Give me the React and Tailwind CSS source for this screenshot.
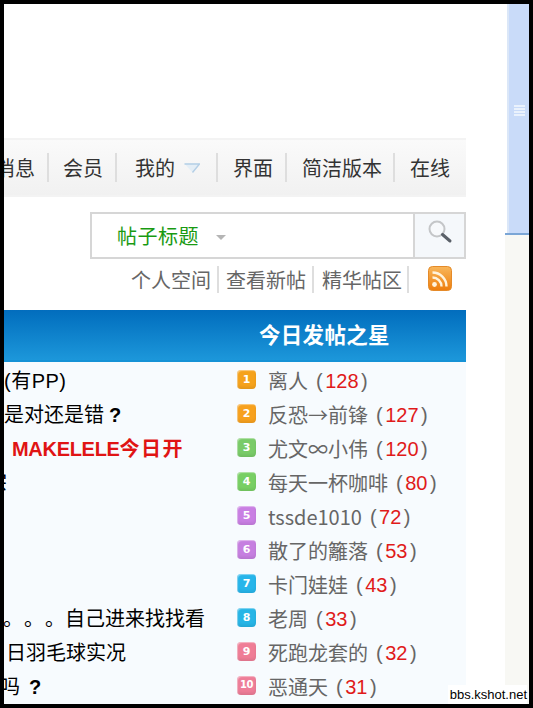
const NAV = [
  { label: "消息", width: "w-[45px]", clip: true },
  { label: "会员", width: "w-[68px]", pad: "pl-[14px]" },
  { label: "我的", width: "w-[101px]", pad: "pl-[18px]", arrow: true },
  { label: "界面", width: "w-[69px]", pad: "pl-[15px]" },
  { label: "简洁版本", width: "w-[108px]" },
  { label: "在线", width: "w-[71px]", last: true },
];

const STARS = [
  { name: "离人", count: 128, color: "#f5a21c" },
  { name: "反恐→前锋", count: 127, color: "#f7a11e" },
  { name: "尤文∞小伟", count: 120, color: "#79cb68" },
  { name: "每天一杯咖啡", count: 80, color: "#78cf64" },
  { name: "tssde1010", count: 72, color: "#c97fe3" },
  { name: "散了的籬落", count: 53, color: "#c67fe0" },
  { name: "卡门娃娃", count: 43, color: "#27b5ea" },
  { name: "老周", count: 33, color: "#27b5e6" },
  { name: "死跑龙套的", count: 32, color: "#ef7d96" },
  { name: "恶通天", count: 31, color: "#ee7d98" },
];

function RssIcon() {
  return (
    <svg width="24" height="25" viewBox="0 0 24 25" className="block">
      <defs>
        <linearGradient id="rss" x1="0" y1="0" x2="0" y2="1">
          <stop offset="0" stopColor="#f8b65a" />
          <stop offset="1" stopColor="#ee7d0c" />
        </linearGradient>
      </defs>
      <rect x="0.5" y="0.5" width="23" height="24" rx="4" fill="url(#rss)" stroke="#e58a28" />
      <circle cx="6.5" cy="18.5" r="2.4" fill="#fff3dc" />
      <path d="M4.5 11.5a9 9 0 0 1 9 9" fill="none" stroke="#fff3dc" strokeWidth="2.4" />
      <path d="M4.5 6.5a14 14 0 0 1 14 14" fill="none" stroke="#fff3dc" strokeWidth="2.4" />
    </svg>
  );
}

function SearchIcon() {
  return (
    <svg width="26" height="26" viewBox="0 0 26 26" className="block">
      <circle cx="10" cy="10" r="7.5" fill="#f7f9fb" stroke="#c4c6c8" strokeWidth="2" />
      <path d="M15.5 15.5l7.5 6.5" stroke="#5a6068" strokeWidth="3" strokeLinecap="round" />
    </svg>
  );
}

function MenuArrow() {
  return (
    <svg width="16" height="10" viewBox="0 0 16 10" className="ml-[9px] block">
      <path d="M0.5 0.5H15.5L8.5 9.5Z" fill="#e4eef6" />
      <path d="M0.5 1H15.5L8.5 9.5" fill="none" stroke="#b4cfe6" strokeWidth="1.4" />
    </svg>
  );
}

function RankBadge({ rank, color }) {
  return (
    <span
      className={`mb-[4px] flex h-[19px] w-[19px] shrink-0 items-center justify-center rounded-[4px] font-bold text-white shadow-[inset_1px_1px_1px_rgba(255,255,255,0.45),inset_0_-2px_3px_rgba(0,0,0,0.08)] ${rank === 10 ? "text-[10px] tracking-[-0.5px]" : "text-[11px]"} leading-none font-['DejaVu_Sans',sans-serif]`}
      style={{ backgroundColor: color }}
    >
      {rank}
    </span>
  );
}

export default function App() {
  return (
    <div className="relative flex h-[708px] w-[533px] overflow-hidden bg-black p-[4px] font-['Liberation_Sans','Noto_Sans_CJK_SC',sans-serif] text-[20px]">
      <main className="h-[700px] w-[501px] bg-white pt-[134px]">
        <div className="w-[462px]">
          {/* nav bar */}
          <nav className="flex h-[59px] items-center overflow-hidden border-y-2 border-[#f3f3f3] bg-gradient-to-b from-[#fafafa] to-[#f1f1f1] text-[#333]">
            {NAV.map((item) => (
              <div
                key={item.label}
                className={`flex h-[29px] shrink-0 items-center ${item.width} ${item.last ? "" : "border-r-2 border-[#dedede]"} ${item.clip ? "justify-end pr-[12px]" : item.pad || "pl-[15px]"}`}
              >
                <span className="whitespace-nowrap pt-[2px]">{item.label}</span>
                {item.arrow && <MenuArrow />}
              </div>
            ))}
          </nav>

          {/* search */}
          <div className="mt-[15px] flex justify-end">
            <div className="flex h-[47px] w-[376px] border-2 border-[#d6d6d6]">
              <div className="flex flex-1 items-center pl-[25px] text-[#199a12]">
                <span className="pt-[3px] tracking-[0.5px]">帖子标题</span>
                <span className="ml-[17px] mt-[3px] h-0 w-0 border-x-[5px] border-t-[5px] border-x-transparent border-t-[#b5b5b5]" />
              </div>
              <div className="flex w-[51px] justify-center border-l-2 border-[#d6d6d6] bg-[#f5f8fb] pt-[5px] pl-[1px]">
                <SearchIcon />
              </div>
            </div>
          </div>

          {/* quick links */}
          <div className="flex h-[51px] items-start justify-end pt-[7px] text-[#666]">
            <div className="flex h-[27px] items-center">
              <span className="w-[88px] border-r-2 border-[#dedede] pt-[3px] leading-[24px]">个人空间</span>
              <span className="w-[95px] border-r-2 border-[#dedede] pl-[7px] pt-[3px] leading-[24px]">查看新帖</span>
              <span className="w-[95px] border-r-2 border-[#dedede] pl-[8px] pt-[3px] leading-[24px]">精华帖区</span>
            </div>
            <div className="ml-[19px] mr-[14px]">
              <RssIcon />
            </div>
          </div>

          {/* table */}
          <section>
            <header className="flex h-[52px] items-center border-b-2 border-[#1592d6] bg-gradient-to-b from-[#026dbd] to-[#1c97da] pl-[255px] pt-[3px] text-[21.5px] font-bold tracking-[0.3px] text-white">
              今日发帖之星
            </header>
            <div className="flex h-[342px] bg-[#f7fbfe] pt-[2px]">
              <ul className="w-[233px] overflow-hidden text-black">
                <li className="flex h-[34px] items-center whitespace-nowrap tracking-[0.5px]">(有PP)</li>
                <li className="flex h-[34px] items-center whitespace-nowrap">
                  是对还是错<b className="ml-[5px]">?</b>
                </li>
                <li className="flex h-[34px] items-center whitespace-nowrap pl-[8px] font-bold text-[#e01414]">
                  <span className="tracking-[-0.3px]">MAKELELE</span>
                  <span className="tracking-[1.5px]">今日开</span>
                </li>
                <li className="flex h-[34px] items-center whitespace-nowrap">
                  <span className="-ml-[17px]">宗</span>
                </li>
                <li className="h-[34px]" />
                <li className="h-[34px]" />
                <li className="h-[34px]" />
                <li className="flex h-[34px] items-center whitespace-nowrap">
                  <span className="-ml-[1px] w-[21px]">。</span>
                  <span className="w-[21px]">。</span>
                  <span className="w-[20px]">。</span>
                  自己进来找找看
                </li>
                <li className="flex h-[34px] items-center whitespace-nowrap pl-[2px]">日羽毛球实况</li>
                <li className="flex h-[34px] items-center whitespace-nowrap">
                  <span className="-ml-[4px]">吗</span>
                  <b className="ml-[9px]">?</b>
                </li>
              </ul>
              <ul className="flex-1">
                {STARS.map((star, i) => (
                  <li key={star.name} className="flex h-[34px] items-center text-[#666]">
                    <RankBadge rank={i + 1} color={star.color} />
                    <span className="ml-[12px] whitespace-nowrap font-['Noto_Sans_CJK_SC',sans-serif]">{star.name}</span>
                    <span className="ml-[8px] whitespace-nowrap">
                      (<span className="px-[2.5px] text-[#e01a1a]">{star.count}</span>)
                    </span>
                  </li>
                ))}
              </ul>
            </div>
          </section>
        </div>
      </main>

      {/* scrollbar */}
      <aside className="h-[700px] w-[24px] bg-[#f8f8f4]">
        <div className="flex h-[231px] border-b-2 border-[#7ba6d6] bg-white pl-[2px]">
          <div className="flex flex-1 items-start justify-center border-l-2 border-[#dbe7f8] bg-[#c9dbf9] pt-[101px]">
            <div className="flex w-[11px] flex-col gap-[1px]">
              <span className="h-[2px] bg-[#eaf2fd]" />
              <span className="h-[2px] bg-[#eaf2fd]" />
              <span className="h-[2px] bg-[#eaf2fd]" />
              <span className="h-[2px] bg-[#eaf2fd]" />
            </div>
          </div>
        </div>
      </aside>

      {/* watermark */}
      <div className="absolute right-[6px] bottom-[4px] bg-white pl-[2px] font-['Liberation_Sans',sans-serif] text-[13px] leading-[19px] text-black">
        bbs.kshot.net
      </div>
    </div>
  );
}
